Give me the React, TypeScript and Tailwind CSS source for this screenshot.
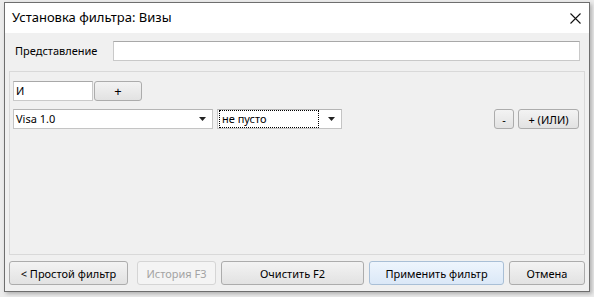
import React from 'react';

const font = { fontFamily: '"Noto Sans", "Open Sans", sans-serif' };

function Btn({
  children,
  className = '',
  variant = 'normal',
}: {
  children: React.ReactNode;
  className?: string;
  variant?: 'normal' | 'primary' | 'disabled';
}) {
  const look =
    variant === 'primary'
      ? 'border-[#a9bfd6] bg-gradient-to-b from-[#eef5fd] to-[#dbe8f7] text-black'
      : variant === 'disabled'
        ? 'border-[#d5d5d5] bg-[#f4f4f4] text-[#a3a3a3]'
        : 'border-[#acacac] bg-gradient-to-b from-[#f3f3f3] to-[#e2e2e2] text-black';
  return (
    <button
      className={`flex items-center justify-center rounded-[3px] border text-[11px] leading-none ${look} ${className}`}
    >
      {children}
    </button>
  );
}

function Arrow() {
  return (
    <svg width="7" height="4" viewBox="0 0 7 4" className="shrink-0">
      <path d="M0 0h7L3.5 4z" fill="#222" />
    </svg>
  );
}

function Combo({ value, width, focused }: { value: string; width: string; focused?: boolean }) {
  return (
    <div
      className={`flex h-[20px] items-center border border-[#c4c4c4] border-t-[#b5b5b5] bg-white pr-[6px] ${width}`}
    >
      <div
        className={`flex h-full flex-1 items-center pl-[2px] text-[11px] ${
          focused ? 'm-[1px] border border-dotted border-black' : ''
        }`}
      >
        {value}
      </div>
      <div className="ml-[8px]">
        <Arrow />
      </div>
    </div>
  );
}

export default function App() {
  return (
    <div className="h-[297px] w-[594px] bg-[#ececec] pt-[2px] pl-[4px]" style={font}>
      <div className="flex h-[290px] w-[586px] flex-col border border-[#6e6e6e] bg-[#f0f0f0] shadow-[2px_2px_4px_rgba(0,0,0,0.25)]">
        {/* title bar */}
        <div className="flex h-[30px] items-center justify-between bg-white pr-[8px] pl-[7px]">
          <span className="text-[13px] text-black">Установка фильтра: Визы</span>
          <svg width="11" height="11" viewBox="0 0 11 11">
            <path d="M0.5 0.5l10 10M10.5 0.5l-10 10" stroke="#111" strokeWidth="1.1" />
          </svg>
        </div>

        <div className="flex flex-1 flex-col px-[4px] pt-[8px] pb-[6px]">
          {/* name row */}
          <div className="flex items-center">
            <span className="w-[104px] pl-[6px] text-[11px] text-black">Представление</span>
            <div className="h-[20px] w-[467px] border border-[#c9c9c9] border-t-[#a8a8a8] bg-white" />
          </div>

          {/* conditions panel */}
          <div className="mt-[10px] flex flex-1 flex-col border border-[#d9d9d9] pt-[9px] pr-[5px] pl-[3px]">
            <div className="flex items-center gap-[1px]">
              <div className="flex h-[20px] w-[80px] items-center border border-[#c9c9c9] border-t-[#a8a8a8] bg-white pl-[2px] text-[11px]">
                И
              </div>
              <Btn className="h-[20px] w-[48px] text-[13px]">+</Btn>
            </div>
            <div className="mt-[8px] flex items-center">
              <Combo value="Visa 1.0" width="w-[200px]" />
              <div className="ml-[4px]">
                <Combo value="не пусто" width="w-[125px]" focused />
              </div>
              <div className="flex-1" />
              <Btn className="h-[20px] w-[20px]">-</Btn>
              <Btn className="ml-[4px] h-[20px] w-[61px]">+ (ИЛИ)</Btn>
            </div>
          </div>

          {/* footer buttons */}
          <div className="mt-[6px] flex h-[24px] items-stretch">
            <Btn className="w-[119px]">&lt; Простой фильтр</Btn>
            <Btn className="ml-[9px] w-[79px]" variant="disabled">
              История F3
            </Btn>
            <Btn className="ml-[5px] w-[143px]">Очистить F2</Btn>
            <Btn className="ml-[5px] w-[135px]" variant="primary">
              Применить фильтр
            </Btn>
            <Btn className="ml-[5px] w-[76px]">Отмена</Btn>
          </div>
        </div>
      </div>
    </div>
  );
}
